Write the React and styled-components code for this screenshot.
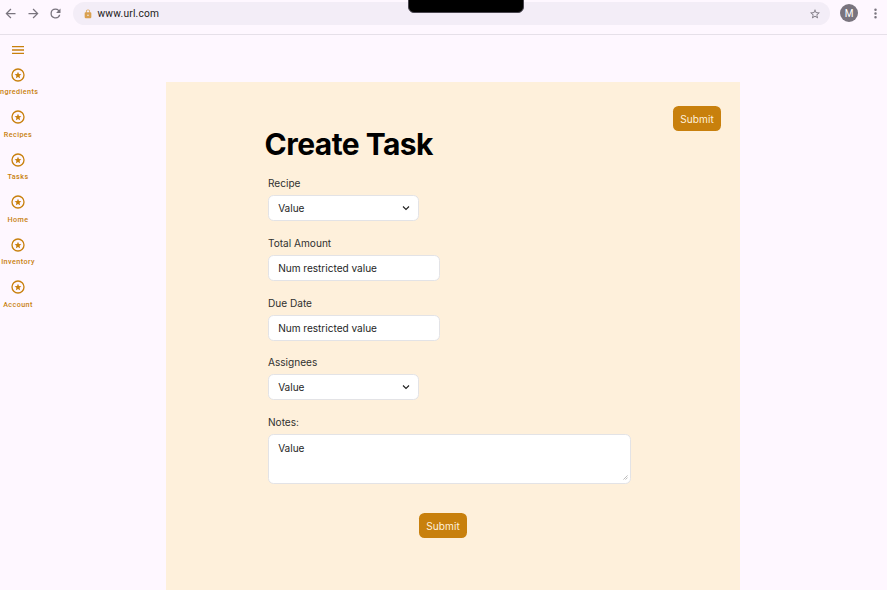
import React from "react";
import styled, { createGlobalStyle } from "styled-components";

const Global = createGlobalStyle`
  *, *::before, *::after { box-sizing: border-box; }
  html, body, #root { margin: 0; height: 100%; }
  body { background: #fef7ff; overflow: hidden; }
  button, textarea, input { font: inherit; margin: 0; }
`;

const accent = "#c8800d";

const Page = styled.div`
  height: 590px;
  width: 887px;
  display: flex;
  flex-direction: column;
  overflow: hidden;
  background: #fef7ff;
  font-family: Inter, sans-serif;
`;

const BrowserBar = styled.header`
  position: relative;
  flex: none;
  height: 35px;
  padding: 2px 4px 0 3px;
  display: flex;
  align-items: flex-start;
  border-bottom: 1px solid #e6e0e9;
`;

const NavButtons = styled.div`
  display: flex;
  gap: 7.6px;
  height: 23px;
  align-items: center;
  margin-right: 9.8px;
`;

const Glyph = styled.svg`
  display: block;
  flex: none;
  width: ${(p) => p.$size}px;
  height: ${(p) => p.$size}px;
  fill: ${(p) => p.$color || "#79747e"};
`;

const AddressBar = styled.div`
  flex: 1;
  height: 23px;
  border-radius: 12px;
  background: #f3edf7;
  display: flex;
  align-items: center;
  padding: 0 9.5px 0 10px;
`;

const Url = styled.span`
  flex: 1;
  margin-left: 4.5px;
  font: 400 10.2px/15px Roboto, sans-serif;
  letter-spacing: 0.22px;
  color: #1d1b20;
`;

const Avatar = styled.div`
  width: 18px;
  height: 18px;
  margin: 2px 10px 0 10px;
  border-radius: 50%;
  background: #79747e;
  color: #fff;
  font: 400 10px/19px Roboto, sans-serif;
  text-align: center;
`;

const MenuSlot = styled.div`
  padding-top: 4px;
  width: 15px;
`;

const Notch = styled.div`
  position: absolute;
  left: 408px;
  top: -8px;
  width: 116px;
  height: 20.5px;
  border: 1px solid #49454f;
  border-radius: 6px;
  background: #000;
`;

const Body = styled.div`
  flex: 1;
  display: flex;
  min-height: 0;
`;

const Rail = styled.nav`
  flex: none;
  width: 36px;
  margin-right: 129.7px;
  padding-top: 6.5px;
  display: flex;
  flex-direction: column;
  align-items: center;
`;

const RailItem = styled.div`
  width: 36px;
  height: 42.5px;
  display: flex;
  flex-direction: column;
  align-items: center;
  color: ${accent};
`;

const RailLabel = styled.span`
  margin-top: 4.6px;
  font: 500 7.2px/10px Roboto, sans-serif;
  letter-spacing: 0.42px;
  white-space: nowrap;
`;

const MenuIconBox = styled.div`
  height: 25.1px;
`;

const Panel = styled.main`
  width: 574.3px;
  margin-top: 46.6px;
  padding: 24px 19px 0 102.3px;
  background: #fef0db;
  display: flex;
  flex-direction: column;
`;

const PanelTop = styled.div`
  display: flex;
  justify-content: flex-end;
`;

const SubmitButton = styled.button`
  width: 48px;
  height: 25px;
  padding: 1px 0 0;
  border: 0;
  border-radius: 5.5px;
  background: ${accent};
  color: #fff1db;
  font-size: 10.1px;
  letter-spacing: 0.05px;
`;

const Title = styled.h1`
  margin: -5px 0 0 -3.4px;
  font-size: 30px;
  line-height: 37px;
  font-weight: 700;
  letter-spacing: -0.55px;
  color: #000;
`;

const Form = styled.form`
  display: flex;
  flex-direction: column;
  align-items: flex-start;
  gap: 14.6px;
  margin-top: 13.8px;
  width: 363px;
`;

const Field = styled.div`
  display: flex;
  flex-direction: column;
  width: ${(p) => p.$width}px;
`;

const Label = styled.label`
  height: 19px;
  font-size: 10.1px;
  line-height: 15px;
  color: #303030;
`;

const Box = styled.div`
  height: ${(p) => p.$height || 26}px;
  display: flex;
  align-items: flex-start;
  justify-content: space-between;
  position: relative;
  padding: ${(p) => (p.$height ? 6.4 : 5)}px 7px 0 9.2px;
  border: 1px solid #e3e3e6;
  border-radius: 5.5px;
  background: #fff;
  color: #1e1e1e;
  font-size: 10.05px;
  line-height: 15px;
`;

const Chevron = styled.svg`
  width: 10px;
  height: 10px;
  margin-top: 2px;
  fill: none;
  stroke: #1e1e1e;
  stroke-width: 1.1;
`;

const ResizeGrip = styled.svg`
  position: absolute;
  right: 2px;
  bottom: 2.5px;
  width: 5px;
  height: 5px;
  stroke: #a5a5a5;
  stroke-width: 0.9;
`;

const FormFooter = styled.div`
  margin-top: 14.8px;
  margin-left: 151px;
`;

const paths = {
  back: "M20 11H7.83l5.59-5.59L12 4l-8 8 8 8 1.41-1.41L7.83 13H20v-2z",
  forward: "M12 4l-1.41 1.41L16.17 11H4v2h12.17l-5.58 5.59L12 20l8-8z",
  refresh:
    "M17.65 6.35A7.96 7.96 0 0 0 12 4a8 8 0 1 0 7.73 10h-2.08A6 6 0 1 1 12 6c1.66 0 3.14.69 4.22 1.78L13 11h7V4l-2.35 2.35z",
  lock: "M18 8h-1V6A5 5 0 0 0 7 6v2H6a2 2 0 0 0-2 2v10c0 1.1.9 2 2 2h12a2 2 0 0 0 2-2V10a2 2 0 0 0-2-2zm-6 9a2 2 0 1 1 0-4 2 2 0 0 1 0 4zm3.1-9H8.9V6a3.1 3.1 0 0 1 6.2 0v2z",
  star: "M22 9.24l-7.19-.62L12 2 9.19 8.63 2 9.24l5.46 4.73L5.82 21 12 17.27 18.18 21l-1.63-7.03L22 9.24zM12 15.4l-3.76 2.27 1-4.28-3.32-2.88 4.38-.38L12 6.1l1.71 4.04 4.38.38-3.32 2.88 1 4.28L12 15.4z",
  dots: "M12 8a2 2 0 1 0 0-4 2 2 0 0 0 0 4zm0 2a2 2 0 1 0 0 4 2 2 0 0 0 0-4zm0 6a2 2 0 1 0 0 4 2 2 0 0 0 0-4z",
  menu: "M3 18h18v-2H3v2zm0-5h18v-2H3v2zm0-7v2h18V6H3z",
  stars:
    "M8.85 16.825L12 14.925l3.15 1.925-.825-3.6 2.775-2.4-3.65-.325L12 7.125l-1.45 3.375-3.65.325 2.775 2.425-.825 3.575zM12 22a10 10 0 1 1 0-20 10 10 0 0 1 0 20zm0-2a8 8 0 1 0 0-16 8 8 0 0 0 0 16z",
};

function Icon({ name, size = 15, color }) {
  return (
    <Glyph viewBox="0 0 24 24" $size={size} $color={color} aria-hidden="true">
      <path d={paths[name]} />
    </Glyph>
  );
}

function SelectField({ label, value }) {
  return (
    <Field $width={151}>
      <Label>{label}</Label>
      <Box>
        {value}
        <Chevron viewBox="0 0 10 10">
          <path d="M2 3.5 5 6.5 8 3.5" />
        </Chevron>
      </Box>
    </Field>
  );
}

function InputField({ label, value }) {
  return (
    <Field $width={172}>
      <Label>{label}</Label>
      <Box>{value}</Box>
    </Field>
  );
}

const railItems = ["Ingredients", "Recipes", "Tasks", "Home", "Inventory", "Account"];

export default function App() {
  return (
    <Page>
      <Global />
      <BrowserBar>
        <NavButtons>
          <Icon name="back" />
          <Icon name="forward" />
          <Icon name="refresh" />
        </NavButtons>
        <AddressBar>
          <Icon name="lock" size={10} color="#d9a050" />
          <Url>www.url.com</Url>
          <Icon name="star" size={12} />
        </AddressBar>
        <Avatar>M</Avatar>
        <MenuSlot>
          <Icon name="dots" />
        </MenuSlot>
        <Notch />
      </BrowserBar>
      <Body>
        <Rail>
          <MenuIconBox>
            <Icon name="menu" size={16} color={accent} />
          </MenuIconBox>
          {railItems.map((item) => (
            <RailItem key={item}>
              <Icon name="stars" size={16} color={accent} />
              <RailLabel>{item}</RailLabel>
            </RailItem>
          ))}
        </Rail>
        <Panel>
          <PanelTop>
            <SubmitButton type="button">Submit</SubmitButton>
          </PanelTop>
          <Title>Create Task</Title>
          <Form>
            <SelectField label="Recipe" value="Value" />
            <InputField label="Total Amount" value="Num restricted value" />
            <InputField label="Due Date" value="Num restricted value" />
            <SelectField label="Assignees" value="Value" />
            <Field $width={363}>
              <Label>Notes:</Label>
              <Box $height={50}>
                Value
                <ResizeGrip viewBox="0 0 6 6">
                  <path d="M0.5 5.5 5.5 0.5M3 5.5 5.5 3" />
                </ResizeGrip>
              </Box>
            </Field>
            <FormFooter>
              <SubmitButton type="button">Submit</SubmitButton>
            </FormFooter>
          </Form>
        </Panel>
      </Body>
    </Page>
  );
}
